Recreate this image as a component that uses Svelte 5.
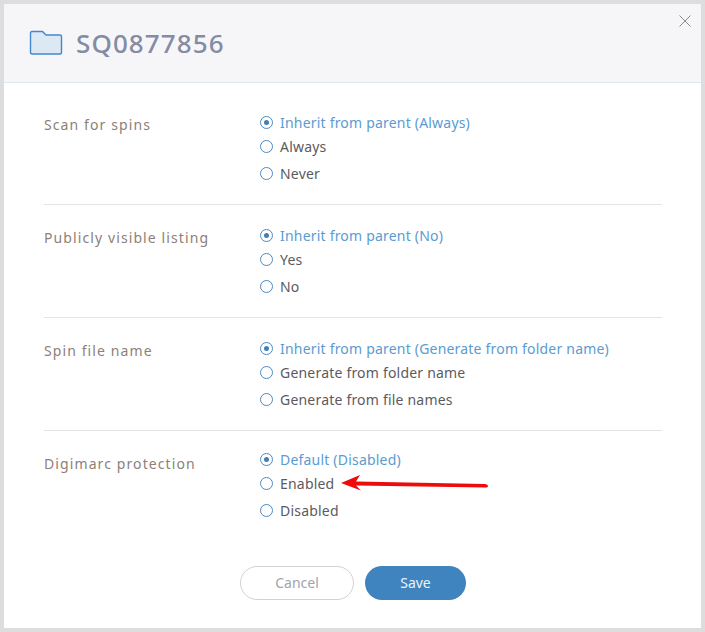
<script lang="ts">
  type Setting = { label: string; options: string[] };

  const settings: Setting[] = [
    { label: 'Scan for spins', options: ['Inherit from parent (Always)', 'Always', 'Never'] },
    { label: 'Publicly visible listing', options: ['Inherit from parent (No)', 'Yes', 'No'] },
    {
      label: 'Spin file name',
      options: ['Inherit from parent (Generate from folder name)', 'Generate from folder name', 'Generate from file names']
    },
    { label: 'Digimarc protection', options: ['Default (Disabled)', 'Enabled', 'Disabled'] }
  ];
</script>

<div class="frame">
  <div class="dialog">
    <header class="head">
      <svg class="folder" width="34" height="26" viewBox="0 0 34 26" aria-hidden="true">
        <path
          d="M1.5 3 Q1.5 1.5 3 1.5 H13.5 L17 5 H31 Q32.5 5 32.5 6.5 V22.5 Q32.5 24 31 24 H3 Q1.5 24 1.5 22.5 Z"
          fill="#dce8f3"
          stroke="#4089cc"
          stroke-width="1.4"
        />
      </svg>
      <h1>SQ0877856</h1>
      <svg class="close" width="14" height="14" viewBox="0 0 14 14" aria-hidden="true">
        <path d="M1.5 1.5 L12.5 12.5 M12.5 1.5 L1.5 12.5" stroke="#8a8a90" stroke-width="1" fill="none" />
      </svg>
    </header>

    <div class="body">
      {#each settings as setting}
        <section class="setting">
          <div class="label">{setting.label}</div>
          <div class="options">
            {#each setting.options as option, i}
              <div class="option" class:current={i === 0}>
                <span class="radio"></span>
                <span>{option}</span>
              </div>
            {/each}
          </div>
        </section>
      {/each}
    </div>

    <footer class="actions">
      <button type="button" class="cancel">Cancel</button>
      <button type="button" class="save">Save</button>
    </footer>
  </div>

  <svg class="arrow" width="150" height="20" viewBox="0 0 150 20" aria-hidden="true">
    <path d="M0 10 L19 2 L15 8.5 L144 11 Q147 11.5 147 13 Q147 14.5 144 14.5 L15 12.5 L20 17.5 Z" fill="#ee0b0b" />
  </svg>
</div>

<style>
  :global(body) {
    margin: 0;
    background: #dddddd;
  }

  .frame {
    position: relative;
    box-sizing: border-box;
    width: 705px;
    height: 632px;
    padding: 4px;
    font-family: 'Noto Sans', 'Open Sans', sans-serif;
  }

  .dialog {
    height: 624px;
    background: #ffffff;
    display: flex;
    flex-direction: column;
  }

  .head {
    position: relative;
    box-sizing: border-box;
    height: 79px;
    flex-shrink: 0;
    display: flex;
    align-items: center;
    gap: 13px;
    padding-left: 25px;
    background: #f6f6f9;
    border-bottom: 1px solid #dfe7ee;
  }

  .head h1 {
    margin: 0;
    font-size: 26px;
    font-weight: 500;
    letter-spacing: 1.1px;
    color: #848ba3;
  }

  .close {
    position: absolute;
    top: 10px;
    right: 9px;
  }

  .body {
    padding: 0 39px 0 40px;
    margin-top: 9px;
  }

  .setting {
    display: flex;
    padding-top: 18px;
    height: 94px;
    border-bottom: 1px solid #e4e4e4;
  }

  .setting:last-child {
    border-bottom: none;
  }

  .setting:last-child .options {
    margin-top: -2px;
  }

  .label {
    width: 216px;
    flex-shrink: 0;
    margin-top: 3px;
    font-size: 14px;
    line-height: 24px;
    letter-spacing: 1.1px;
    color: #8d7f78;
  }

  .option {
    display: flex;
    align-items: center;
    gap: 7px;
    height: 24px;
    font-size: 14px;
    letter-spacing: 0.2px;
    color: #5c5a5e;
  }

  .option.current {
    margin-bottom: -1px;
    color: #5b9bd0;
  }

  .option:nth-child(2) {
    margin-top: 1px;
  }

  .option:nth-child(3) {
    margin-top: 3px;
  }

  .radio {
    box-sizing: border-box;
    position: relative;
    width: 13px;
    height: 13px;
    border: 1px solid #4b8ac2;
    border-radius: 50%;
    flex-shrink: 0;
  }

  .current .radio::after {
    content: '';
    position: absolute;
    inset: 3px;
    border-radius: 50%;
    background: #3f7fb8;
  }

  .actions {
    display: flex;
    gap: 11px;
    margin-top: auto;
    margin-bottom: 28px;
    padding-left: 236px;
  }

  .actions button {
    box-sizing: border-box;
    height: 34px;
    border-radius: 17px;
    font-family: inherit;
    font-size: 14px;
    padding: 0 0 2px;
  }

  .cancel {
    width: 114px;
    background: #ffffff;
    border: 1px solid #d2d2d2;
    color: #a3a3ab;
  }

  .save {
    width: 101px;
    background: #3f83bf;
    border: none;
    color: #eef4fa;
  }

  .arrow {
    position: absolute;
    left: 341px;
    top: 473px;
  }
</style>
